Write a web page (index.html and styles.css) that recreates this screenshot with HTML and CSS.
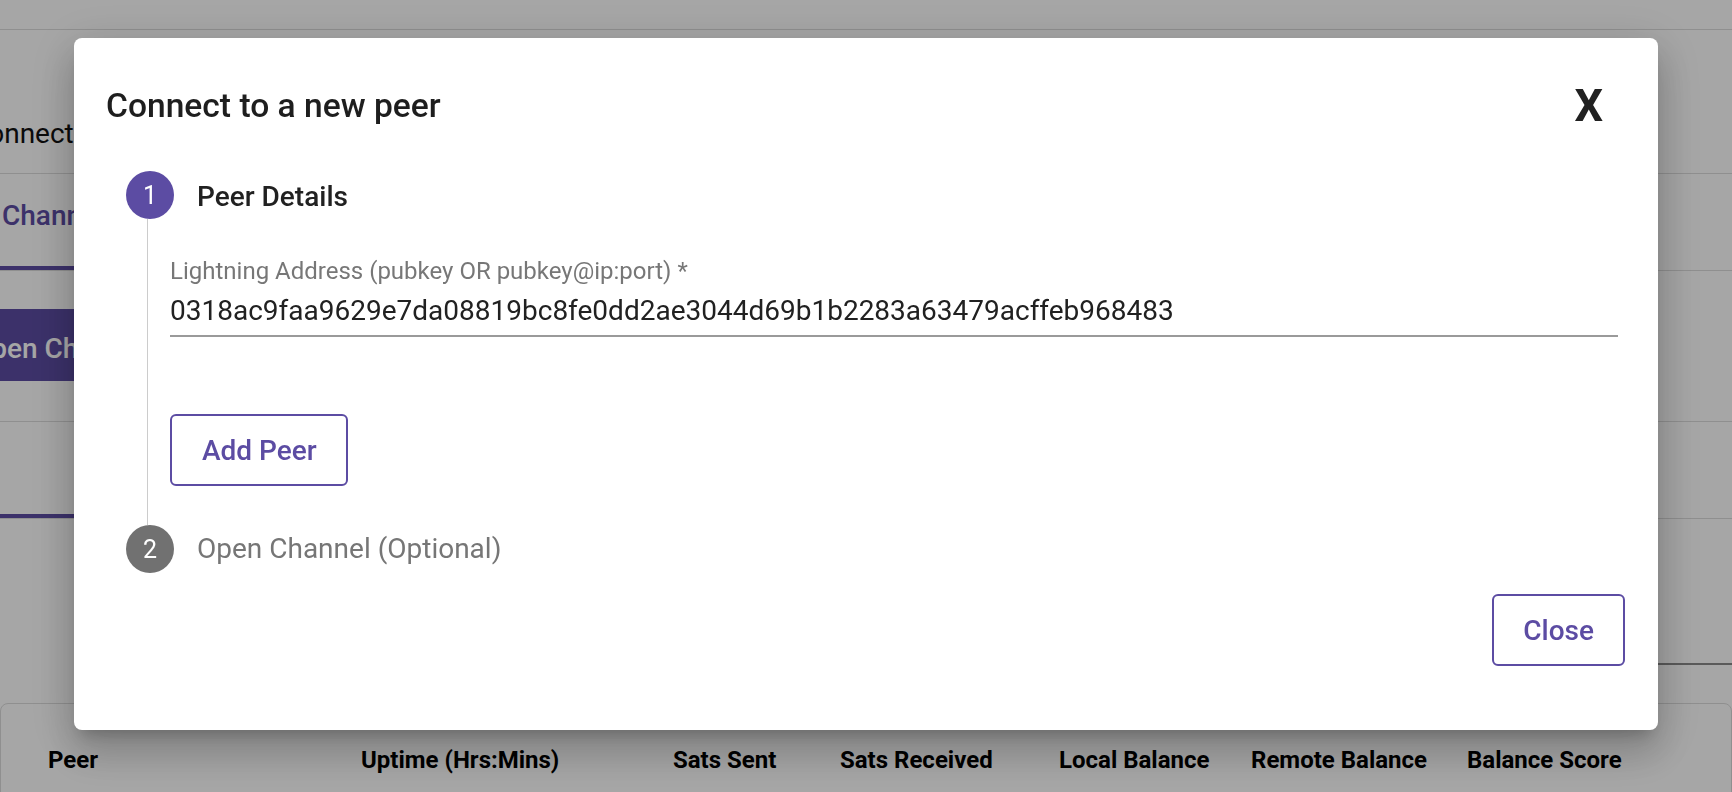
FILE: index.html
```html
<!DOCTYPE html>
<html lang="en">
<head>
<meta charset="utf-8">
<title>Connect to a new peer</title>
<link rel="stylesheet" href="styles.css">
</head>
<body>
<div class="page">
  <header class="topbar"></header>
  <section class="title-row">
    <h1 class="page-title">Connected Peers</h1>
  </section>
  <nav class="tabs">
    <div class="tab active">Channels</div>
    <div class="tab">Peers</div>
  </nav>
  <div class="actions-row">
    <button class="btn-primary">Open Channel</button>
    <button class="btn-primary">Connect Peer</button>
  </div>
  <nav class="tabs tabs-sub">
    <div class="tab active">Active Peers</div>
    <div class="tab">Pending</div>
  </nav>
  <div class="search-row">
    <div class="search-field"></div>
  </div>
  <div class="card">
    <div class="table-head">
      <span>Peer</span>
      <span>Uptime (Hrs:Mins)</span>
      <span>Sats Sent</span>
      <span>Sats Received</span>
      <span>Local Balance</span>
      <span>Remote Balance</span>
      <span>Balance Score</span>
    </div>
  </div>
</div>

<div class="backdrop">
  <div class="dialog" role="dialog" aria-labelledby="dlg-title">
    <div class="dialog-head">
      <h2 class="dialog-title" id="dlg-title">Connect to a new peer</h2>
      <button class="close-x" aria-label="Close">X</button>
    </div>
    <div class="stepper">
      <div class="step-head">
        <span class="step-icon">1</span>
        <span class="step-label active">Peer Details</span>
      </div>
      <div class="step-body">
        <label class="field-label">Lightning Address (pubkey OR pubkey@ip:port) *</label>
        <div class="field-input">0318ac9faa9629e7da08819bc8fe0dd2ae3044d69b1b2283a63479acffeb968483</div>
        <button class="btn-outline">Add Peer</button>
      </div>
      <div class="step-head">
        <span class="step-icon idle">2</span>
        <span class="step-label idle">Open Channel (Optional)</span>
      </div>
    </div>
    <div class="dialog-actions">
      <button class="btn-outline btn-close">Close</button>
    </div>
  </div>
</div>
</body>
</html>
```

FILE: styles.css
```css
html, body {
  margin: 0;
  padding: 0;
}
body {
  width: 1732px;
  height: 792px;
  overflow: hidden;
  background: #ffffff;
  font-family: Roboto, "Liberation Sans", Arial, sans-serif;
  color: #212121;
}

/* ---------- underlying page ---------- */
.page {
  display: flex;
  flex-direction: column;
}
.topbar {
  height: 29px;
  border-bottom: 1px solid #dcdcdc;
}
.title-row {
  height: 143px;
  border-bottom: 1px solid #dcdcdc;
  display: flex;
  align-items: flex-end;
}
.page-title {
  margin: 0 0 23px -30px;
  font: 400 28px/32px Roboto, sans-serif;
  color: #111;
}
.tabs {
  height: 96px;
  border-bottom: 1px solid #dcdcdc;
  display: flex;
  align-items: flex-end;
  gap: 40px;
}
.tab {
  font: 500 28px/32px Roboto, sans-serif;
  color: #444;
  padding: 0 24px 34px 24px;
  border-bottom: 4px solid transparent;
}
.tabs .tab.active {
  color: #5c4ca3;
  border-bottom-color: #5c4ca3;
  margin-left: -22px;
}
.tabs-sub .tab.active {
  padding-left: 120px;
  margin-left: -40px;
}
.actions-row {
  height: 151px;
  border-bottom: 1px solid #dcdcdc;
  display: flex;
  align-items: flex-start;
  gap: 24px;
  padding-top: 38px;
  box-sizing: border-box;
}
.btn-primary {
  margin-left: -58px;
  height: 72px;
  padding: 6px 30px 0 30px;
  border: 0;
  border-radius: 6px;
  background: #5c4ca3;
  color: #fff;
  font: 500 28px Roboto, sans-serif;
}
.search-row {
  height: 146px;
  display: flex;
  justify-content: flex-end;
  align-items: flex-end;
}
.search-field {
  width: 900px;
  height: 40px;
  border-bottom: 2px solid #8a8a8a;
}
.card {
  margin-top: 38px;
  height: 200px;
  border: 1px solid #dcdcdc;
  border-radius: 8px;
  background: #fff;
}
.table-head {
  display: grid;
  grid-template-columns: 313px 312px 167px 219px 192px 216px 1fr;
  padding: 40px 0 0 47px;
  font: 700 24px/32px Roboto, sans-serif;
  color: #000;
}

/* ---------- modal ---------- */
.backdrop {
  position: fixed;
  inset: 0;
  background: rgba(0, 0, 0, 0.35);
  display: flex;
  justify-content: center;
  align-items: flex-start;
  padding-top: 38px;
  box-sizing: border-box;
}
.dialog {
  width: 1584px;
  height: 692px;
  background: #fff;
  border-radius: 8px;
  box-shadow: 0 11px 15px -7px rgba(0, 0, 0, 0.2),
              0 24px 38px 3px rgba(0, 0, 0, 0.14),
              0 9px 46px 8px rgba(0, 0, 0, 0.12);
  display: flex;
  flex-direction: column;
  box-sizing: border-box;
}
.dialog-head {
  display: flex;
  justify-content: space-between;
  align-items: flex-start;
  padding: 45px 55px 0 32px;
}
.dialog-title {
  margin: -1px 0 0 0;
  font: 500 33.6px/48px Roboto, sans-serif;
  color: #1e1e1e;
}
.close-x {
  margin: 0;
  padding: 0;
  border: 0;
  background: none;
  font: 700 45px/45px Roboto, sans-serif;
  color: #212121;
}
.stepper {
  margin-top: 41px;
  padding: 0 40px 0 52px;
}
.step-head {
  display: flex;
  align-items: center;
  gap: 23px;
  height: 48px;
}
.step-icon {
  width: 48px;
  height: 48px;
  border-radius: 50%;
  background: #5c4ca3;
  color: #fff;
  display: flex;
  align-items: center;
  justify-content: center;
  font: 400 25px/1 Roboto, sans-serif;
}
.step-icon.idle {
  background: #717171;
}
.step-label {
  font: 500 28px/48px Roboto, sans-serif;
  color: #212121;
}
.step-label.active {
  padding-top: 3px;
}
.step-label.idle {
  font-weight: 400;
  color: #767676;
}
.step-body {
  margin-left: 21px;
  border-left: 1px solid #cccccc;
  padding: 38px 0 39px 22px;
  display: flex;
  flex-direction: column;
  align-items: flex-start;
}
.field-label {
  display: block;
  font: 400 24px/28px Roboto, sans-serif;
  color: #777777;
}
.field-input {
  align-self: stretch;
  margin-top: 8px;
  padding-bottom: 6px;
  border-bottom: 2px solid #9a9a9a;
  font: 400 28px/36px Roboto, sans-serif;
  color: #212121;
}
.btn-outline {
  margin-top: 77px;
  height: 72px;
  padding: 0 29px 0 30px;
  border: 2px solid #5c4ca3;
  border-radius: 6px;
  background: #fff;
  color: #5c4ca3;
  font: 500 28px Roboto, sans-serif;
}
.dialog-actions {
  margin-top: 21px;
  display: flex;
  justify-content: flex-end;
  padding-right: 33px;
}
.btn-close {
  margin-top: 0;
  padding: 0 29px;
}
```
